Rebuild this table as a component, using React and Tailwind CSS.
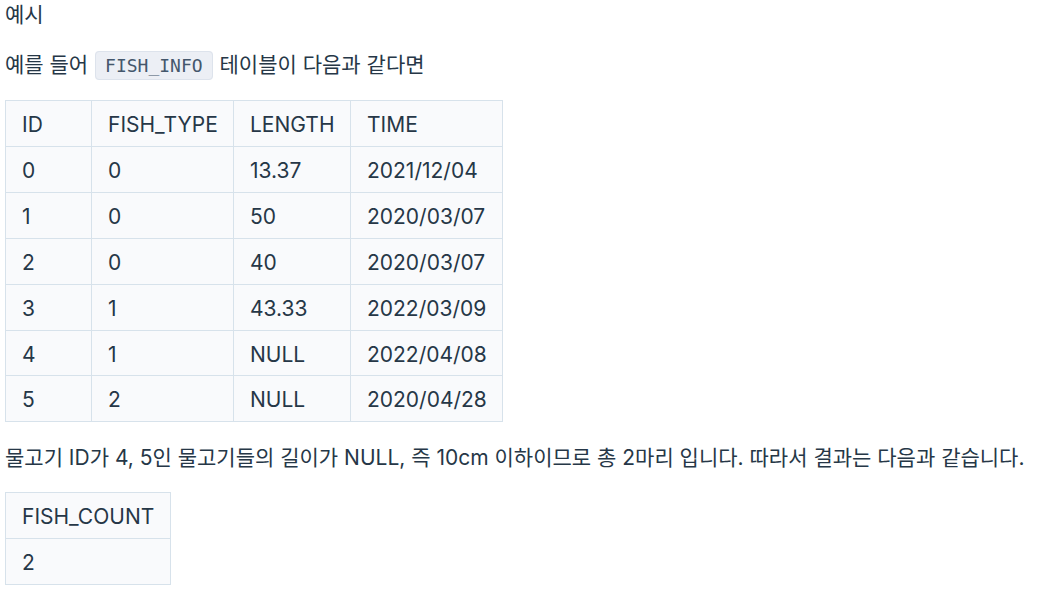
export default function App() {
  const rows = [
    ["0", "0", "13.37", "2021/12/04"],
    ["1", "0", "50", "2020/03/07"],
    ["2", "0", "40", "2020/03/07"],
    ["3", "1", "43.33", "2022/03/09"],
    ["4", "1", "NULL", "2022/04/08"],
    ["5", "2", "NULL", "2020/04/28"],
  ];
  const cell = "border border-[#d7e2eb] bg-[#f9fafc] px-4 pt-[10px] pb-[6px] text-left font-normal leading-[28.9px] align-middle whitespace-nowrap";
  return (
    <div
      className="pl-[5px] pt-[1px] text-[21px] text-[#263747]"
      style={{ fontFamily: 'Inter, "Noto Sans CJK KR", sans-serif' }}
    >
      <p className="leading-[28px]">예시</p>
      <p className="mt-[22px] leading-[28px]">
        예를 들어{" "}
        <code
          className="mx-[1px] rounded-[4px] border border-[#dde3ec] bg-[#eceff5] px-[9px] py-[3px] text-[18px] text-[#44576c]"
          style={{ fontFamily: '"DejaVu Sans Mono", monospace' }}
        >
          FISH_INFO
        </code>{" "}
        테이블이 다음과 같다면
      </p>
      <table className="mt-[20px] w-[497px] table-fixed border-collapse">
        <colgroup>
          <col className="w-[86px]" />
          <col className="w-[142px]" />
          <col className="w-[117px]" />
          <col className="w-[152px]" />
        </colgroup>
        <thead>
          <tr>
            {["ID", "FISH_TYPE", "LENGTH", "TIME"].map((h) => (
              <th key={h} className={cell}>{h}</th>
            ))}
          </tr>
        </thead>
        <tbody>
          {rows.map((r, i) => (
            <tr key={i}>
              {r.map((c, j) => (
                <td key={j} className={cell}>{c}</td>
              ))}
            </tr>
          ))}
        </tbody>
      </table>
      <p className="mt-[22px] leading-[28px]">
        물고기 ID가 4, 5인 물고기들의 길이가 NULL, 즉 10cm 이하이므로 총 2마리 입니다. 따라서 결과는 다음과 같습니다.
      </p>
      <table className="mt-[20px] w-[166px] table-fixed border-collapse">
        <thead>
          <tr>
            <th className={cell}>FISH_COUNT</th>
          </tr>
        </thead>
        <tbody>
          <tr>
            <td className={cell}>2</td>
          </tr>
        </tbody>
      </table>
    </div>
  );
}
